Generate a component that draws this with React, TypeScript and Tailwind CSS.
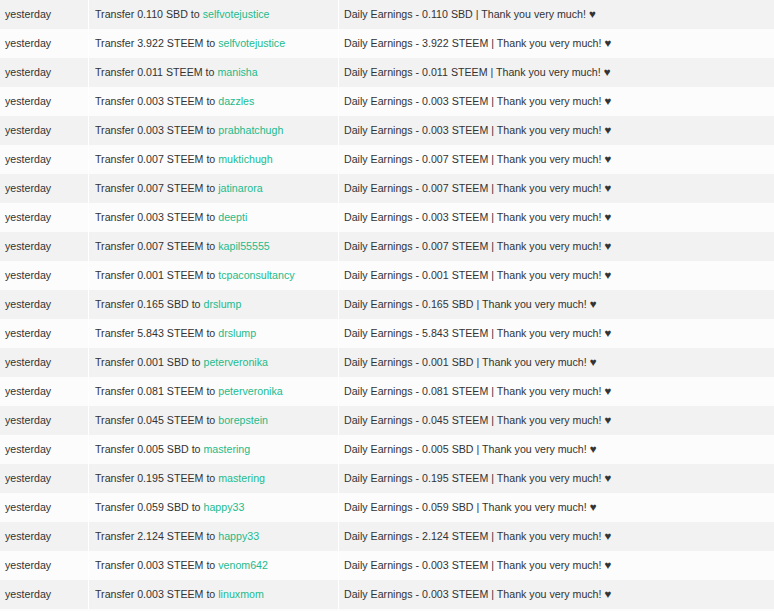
const ROWS = [
  ["0.110", "SBD", "selfvotejustice"],
  ["3.922", "STEEM", "selfvotejustice"],
  ["0.011", "STEEM", "manisha"],
  ["0.003", "STEEM", "dazzles"],
  ["0.003", "STEEM", "prabhatchugh"],
  ["0.007", "STEEM", "muktichugh"],
  ["0.007", "STEEM", "jatinarora"],
  ["0.003", "STEEM", "deepti"],
  ["0.007", "STEEM", "kapil55555"],
  ["0.001", "STEEM", "tcpaconsultancy"],
  ["0.165", "SBD", "drslump"],
  ["5.843", "STEEM", "drslump"],
  ["0.001", "SBD", "peterveronika"],
  ["0.081", "STEEM", "peterveronika"],
  ["0.045", "STEEM", "borepstein"],
  ["0.005", "SBD", "mastering"],
  ["0.195", "STEEM", "mastering"],
  ["0.059", "SBD", "happy33"],
  ["2.124", "STEEM", "happy33"],
  ["0.003", "STEEM", "venom642"],
  ["0.003", "STEEM", "linuxmom"],
];

export default function App() {
  return (
    <div className="w-[774px] h-[611px] overflow-hidden bg-[#fcfcfc] font-['Liberation_Sans',Arial,sans-serif] text-[10.65px] text-[#333]">
      <div className="shadow-[inset_0_1px_0_#e6e6e6]">
        {ROWS.map(([amount, coin, to], i) => (
          <div
            key={i}
            className={`grid grid-cols-[88px_250px_1fr] h-[29px] items-stretch ${i % 2 === 0 ? "bg-[#f2f2f2]" : "bg-[#fcfcfc]"}`}
          >
            <div className="flex items-center pl-[5px]">yesterday</div>
            <div className="flex items-center border-l border-white pl-[6px]">
              Transfer {amount} {coin} to&nbsp;<span className="text-[#22bb8c]">{to}</span>
            </div>
            <div className="flex items-center border-l border-white pl-[5px]">
              Daily Earnings - {amount} {coin} | Thank you very much!&nbsp;<span className="text-[11.5px]">♥</span>
            </div>
          </div>
        ))}
      </div>
    </div>
  );
}
